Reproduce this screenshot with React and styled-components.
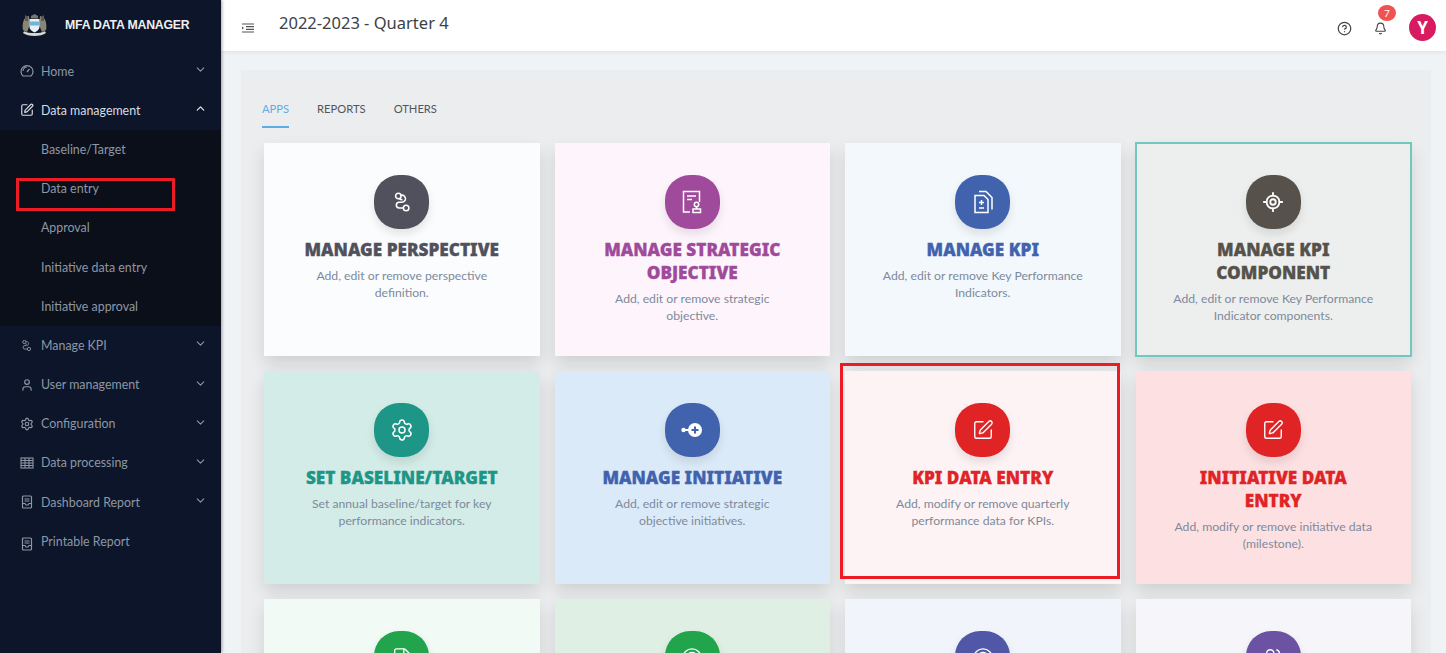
import React from 'react';
import styled, { createGlobalStyle } from 'styled-components';
import {
  Bell, ChevronDown, ChevronUp, CircleHelp, LocateFixed, Settings, SquarePen,
  User, FileText, Target, Users,
} from 'lucide-react';

const GlobalStyle = createGlobalStyle`
  html, body {
    margin: 0;
    height: 100%;
    overflow: hidden;
    font-family: Lato, "Noto Sans", "Liberation Sans", sans-serif;
  }
  * { box-sizing: border-box; }
`;

// custom drawn icons
const RouteIcon = ({ size = 22 }) => (
  <svg width={size} height={size} viewBox="0 0 24 24" fill="none" stroke="currentColor" strokeWidth="1.7">
    <circle cx="8" cy="5.5" r="3" />
    <circle cx="16.5" cy="18.5" r="3" />
    <path d="M10.5 4.5h1.5a4 4 0 0 1 3.5 5.5 4 4 0 0 1-3.5 2.2h-3a3.2 3.2 0 0 0 0 6.4h4.6" />
    <path d="M9 8.3c1 1 2 1.3 3.5 1.3" />
  </svg>
);

const StampDocIcon = () => (
  <svg width="24" height="26" viewBox="0 0 24 26" fill="none" stroke="currentColor" strokeWidth="1.5">
    <path d="M10 23H3.500V2.500h16V13" />
    <path d="M7 7h9M7 10.500h5" />
    <circle cx="16.500" cy="15.500" r="2.200" />
    <path d="M13 23.500v-3.500h7.500v3.500zM16.500 18v2" />
  </svg>
);

const FilesIcon = () => (
  <svg width="24" height="26" viewBox="0 0 24 26" fill="none" stroke="currentColor" strokeWidth="1.5">
    <path d="M4 6.500h9l4 4v13H4z" />
    <path d="M8 2.500h7l6 6v12" />
    <path d="M10.500 11v5M8 13.500h5M8 19h5" />
  </svg>
);

const NodePlusIcon = () => (
  <svg width="24" height="24" viewBox="0 0 24 24" fill="currentColor">
    <circle cx="3.500" cy="12" r="2.200" />
    <rect x="4" y="11" width="8" height="2" />
    <circle cx="15" cy="12" r="7" />
    <path d="M14 8.500h2V11h2.500v2H16v2.500h-2V13h-2.500v-2H14z" fill="#4163ae" />
  </svg>
);

const GaugeIcon = () => (
  <svg width="14" height="14" viewBox="0 0 14 14" fill="none" stroke="currentColor" strokeWidth="1.2">
    <path d="M3 12h8a6 6 0 1 0-8 0z" />
    <path d="M3 7a4 4 0 0 1 4-4M7 8l2.500-3" />
  </svg>
);

const GridIcon = () => (
  <svg width="14" height="12" viewBox="0 0 14 12" fill="none" stroke="currentColor" strokeWidth="1.1">
    <rect x="1" y="1" width="12" height="10" />
    <path d="M1 3.500h12M1 6h12M1 8.500h12M5 1v10M9 1v10" />
  </svg>
);

const ReportIcon = ({ $drop }) => (
  <svg width="14" height="14" viewBox="0 0 14 14" fill="none" stroke="currentColor" strokeWidth="1.2" style={$drop ? { marginTop: 6 } : undefined}>
    <rect x="2.500" y="1" width="9" height="12" rx="1" />
    <path d="M2.500 8.500h2.500l1 1.500h2l1-1.500h2.500M4.500 4h5M4.500 6h5" />
  </svg>
);

const MenuToggleIcon = () => (
  <svg width="12" height="10" viewBox="0 0 12 10" fill="none" stroke="#555" strokeWidth="1.2" style={{ marginTop: 5 }}>
    <path d="M0 1h12M4 3.700h8M4 6.300h8M0 9h12" />
    <path d="M0 3.500v3l2-1.500z" fill="#555" stroke="none" />
  </svg>
);

const Crest = () => (
  <svg width="27" height="27" viewBox="0 0 27 27">
    <path d="M5 5c-3 3-4 8-3 13l4 2 3-7-1-9z" fill="#8a8674" />
    <path d="M22 5c3 3 4 8 3 13l-4 2-3-7 1-9z" fill="#8a8674" />
    <path d="M4 3l3 2v4H4zM23 3l-3 2v4h3z" fill="#5e5b4f" />
    <path d="M10 4l3.500-2L17 4v2.500h-7z" fill="#77766a" />
    <path d="M8.500 7h10v8c0 2.500-2.500 4.500-5 5.500-2.500-1-5-3-5-5.500z" fill="#e9eef2" />
    <path d="M8.500 9.500h10v4h-10z" fill="#6fb2dc" />
    <path d="M2 21c5 4 18 4 23 0l-1-1.800c-5 2.500-16 2.500-21 0z" fill="#d8d8cf" />
  </svg>
);

const menu = [
  { label: 'Home', icon: <GaugeIcon />, chevron: true },
  {
    label: 'Data management',
    icon: <SquarePen size={14} />,
    chevron: true,
    open: true,
    children: ['Baseline/Target', 'Data entry', 'Approval', 'Initiative data entry', 'Initiative approval'],
  },
  { label: 'Manage KPI', icon: <RouteIcon size={13} />, chevron: true },
  { label: 'User management', icon: <User size={14} />, chevron: true },
  { label: 'Configuration', icon: <Settings size={14} />, chevron: true },
  { label: 'Data processing', icon: <GridIcon />, chevron: true },
  { label: 'Dashboard Report', icon: <ReportIcon />, chevron: true },
  { label: 'Printable Report', icon: <ReportIcon $drop /> },
];

const cards = [
  { title: 'MANAGE PERSPECTIVE', text: 'Add, edit or remove perspective definition.', bg: '#fbfcfe', color: '#50515c', icon: <RouteIcon /> },
  { title: 'MANAGE STRATEGIC OBJECTIVE', text: 'Add, edit or remove strategic objective.', bg: '#fdf5fb', color: '#a04a9b', icon: <StampDocIcon /> },
  { title: 'MANAGE KPI', text: 'Add, edit or remove Key Performance Indicators.', bg: '#f3f8fd', color: '#4163ae', icon: <FilesIcon /> },
  { title: 'MANAGE KPI COMPONENT', text: 'Add, edit or remove Key Performance Indicator components.', bg: '#edefee', color: '#56524b', icon: <LocateFixed size={22} />, selected: true },
  { title: 'SET BASELINE/TARGET', text: 'Set annual baseline/target for key performance indicators.', bg: '#d3ece7', color: '#1d9687', icon: <Settings size={24} strokeWidth={1.5} /> },
  { title: 'MANAGE INITIATIVE', text: 'Add, edit or remove strategic objective initiatives.', bg: '#dbeaf8', color: '#4163ae', icon: <NodePlusIcon /> },
  { title: 'KPI DATA ENTRY', text: 'Add, modify or remove quarterly performance data for KPIs.', bg: '#fdf3f4', color: '#e02426', icon: <SquarePen size={22} strokeWidth={1.5} />, marked: true },
  { title: 'INITIATIVE DATA ENTRY', text: 'Add, modify or remove initiative data (milestone).', bg: '#fde0e1', color: '#e02426', icon: <SquarePen size={22} strokeWidth={1.5} /> },
  { bg: '#f1faf5', color: '#22a44c', icon: <FileText size={22} strokeWidth={1.5} /> },
  { bg: '#dfefe3', color: '#22a44c', icon: <Target size={22} strokeWidth={1.5} /> },
  { bg: '#f1f4fb', color: '#5057a6', icon: <Target size={22} strokeWidth={1.5} /> },
  { bg: '#f5f5fa', color: '#6b52a3', icon: <Users size={22} strokeWidth={1.5} /> },
];

export default function App() {
  return (
    <Page>
      <GlobalStyle />
      <Sidebar>
        <Brand>
          <Crest />
          <BrandName>MFA DATA MANAGER</BrandName>
        </Brand>
        {menu.map((item) => (
          <div key={item.label}>
            <MenuRow $active={item.open}>
              <MenuIcon>{item.icon}</MenuIcon>
              <MenuLabel>{item.label}</MenuLabel>
              {item.chevron && (
                <Caret>{item.open ? <ChevronUp size={13} strokeWidth={2.5} /> : <ChevronDown size={13} />}</Caret>
              )}
            </MenuRow>
            {item.children && (
              <SubMenu>
                {item.children.map((child) => (
                  <SubRow key={child}>
                    {child}
                    {child === 'Data entry' && <SideMark />}
                  </SubRow>
                ))}
              </SubMenu>
            )}
          </div>
        ))}
      </Sidebar>
      <Main>
        <Header>
          <MenuToggleIcon />
          <PageTitle>2022-2023 - Quarter 4</PageTitle>
          <HeaderActions>
            <HelpWrap><CircleHelp size={15} color="#444" /></HelpWrap>
            <BellWrap>
              <Bell size={13} color="#444" />
              <Badge>7</Badge>
            </BellWrap>
            <Avatar>Y</Avatar>
          </HeaderActions>
        </Header>
        <Content>
          <Panel>
            <Tabs>
              <Tab $active>APPS</Tab>
              <Tab>REPORTS</Tab>
              <Tab>OTHERS</Tab>
            </Tabs>
            <CardGrid>
              {cards.map((card, i) => (
                <Card key={i} $bg={card.bg} $selected={card.selected}>
                  <IconBadge $color={card.color}>{card.icon}</IconBadge>
                  {card.title && <CardTitle $color={card.color}>{card.title}</CardTitle>}
                  {card.text && <CardText>{card.text}</CardText>}
                  {card.marked && <CardMark />}
                </Card>
              ))}
            </CardGrid>
          </Panel>
        </Content>
      </Main>
    </Page>
  );
}

const Page = styled.div`
  display: flex;
  width: 100%;
  height: 100vh;
  overflow: hidden;
  background: #f0f3f6;
`;
const Sidebar = styled.aside`
  width: 221px;
  flex-shrink: 0;
  background: #0c1529;
  box-shadow: 1px 0 3px rgba(0, 0, 0, 0.35);
  z-index: 2;
`;
const Brand = styled.div`
  height: 52px;
  display: flex;
  align-items: center;
  gap: 17px;
  padding: 0 0 2px 21px;
`;
const BrandName = styled.span`
  font-family: "Liberation Sans", sans-serif;
  font-size: 12.3px;
  font-weight: 700;
  letter-spacing: -0.2px;
  color: #eef0f3;
`;
const MenuRow = styled.div`
  height: 39.2px;
  display: flex;
  align-items: center;
  padding: 0 14px 1px 20px;
  font-size: 12.4px;
  color: ${(p) => (p.$active ? '#d9dde3' : '#8d97a6')};
`;
const MenuIcon = styled.span`
  width: 21px;
  display: flex;
  align-items: center;
`;
const MenuLabel = styled.span`
  flex: 1;
`;
const Caret = styled.span`
  display: flex;
  margin-top: -3px;
`;
const SubMenu = styled.div`
  background: #0b0f19;
`;
const SubRow = styled.div`
  position: relative;
  height: 39.2px;
  display: flex;
  align-items: center;
  padding: 0 0 1px 41px;
  font-size: 12.4px;
  color: #8d97a6;
`;
const SideMark = styled.span`
  position: absolute;
  left: 16px;
  top: 8px;
  width: 159px;
  height: 33px;
  border: 3px solid #ed1c24;
`;
const Main = styled.main`
  flex: 1;
  min-width: 0;
  display: flex;
  flex-direction: column;
`;
const Header = styled.header`
  height: 51px;
  flex-shrink: 0;
  display: flex;
  align-items: center;
  padding: 0 10px 0 21px;
  background: #ffffff;
  box-shadow: 0 1px 4px rgba(0, 0, 0, 0.08);
`;
const PageTitle = styled.h1`
  margin: -6px 0 0 25px;
  font-family: "Noto Sans", sans-serif;
  font-size: 16.5px;
  font-weight: 400;
  color: #3d4146;
`;
const HeaderActions = styled.div`
  margin-left: auto;
  display: flex;
  align-items: center;
  gap: 22px;
  padding-top: 4px;
`;
const HelpWrap = styled.span`
  display: flex;
  margin-top: 2px;
`;
const BellWrap = styled.span`
  position: relative;
  display: flex;
  margin-top: 2px;
`;
const Badge = styled.span`
  position: absolute;
  top: -17px;
  left: 4px;
  width: 18px;
  height: 16px;
  border-radius: 50%;
  background: #ef5350;
  color: #ffffff;
  font-size: 10px;
  display: flex;
  align-items: center;
  justify-content: center;
`;
const Avatar = styled.span`
  width: 27px;
  height: 27px;
  border-radius: 50%;
  background: #d81b60;
  color: #ffffff;
  font-family: "Noto Sans", sans-serif;
  font-size: 17px;
  font-weight: 700;
  display: flex;
  align-items: center;
  justify-content: center;
`;
const Content = styled.div`
  flex: 1;
  padding: 19px 15px 0 20px;
`;
const Panel = styled.section`
  background: #ecedee;
  height: 600px;
  padding: 30px 20px 0 23px;
`;
const Tabs = styled.nav`
  display: flex;
  gap: 28px;
  margin-left: -2px;
  height: 43px;
`;
const Tab = styled.span`
  height: 28px;
  padding-top: 2px;
  font-size: 11.2px;
  color: ${(p) => (p.$active ? '#5dade2' : '#52565c')};
  border-bottom: 2px solid ${(p) => (p.$active ? '#5dade2' : 'transparent')};
`;
const CardGrid = styled.div`
  display: grid;
  grid-template-columns: repeat(4, 275.5px);
  grid-auto-rows: 213px;
  gap: 15px;
`;
const Card = styled.article`
  position: relative;
  display: flex;
  flex-direction: column;
  align-items: center;
  padding: 32px 36px 0;
  text-align: center;
  background: ${(p) => p.$bg};
  box-shadow: 0 8px 16px rgba(0, 0, 0, 0.12);
  outline: ${(p) => (p.$selected ? '2px solid #6fc9bf' : 'none')};
  outline-offset: -1px;
`;
const IconBadge = styled.span`
  width: 55px;
  height: 54px;
  flex-shrink: 0;
  border-radius: 25px;
  background: ${(p) => p.$color};
  color: #ffffff;
  box-shadow: 0 5px 10px rgba(0, 0, 0, 0.1);
  display: flex;
  align-items: center;
  justify-content: center;
`;
const CardTitle = styled.h2`
  margin: 9px 0 0;
  font-family: "Noto Sans", sans-serif;
  font-size: 17.2px;
  font-weight: 900;
  line-height: 23px;
  color: ${(p) => p.$color};
  -webkit-text-stroke: 0.3px ${(p) => p.$color};
`;
const CardText = styled.p`
  margin: 7px 0 0;
  font-size: 12.2px;
  line-height: 16.5px;
  color: #7d8a9c;
`;
const CardMark = styled.span`
  position: absolute;
  top: -8px;
  left: -5px;
  right: 1px;
  bottom: 5px;
  border: 3px solid #ed1c24;
`;
